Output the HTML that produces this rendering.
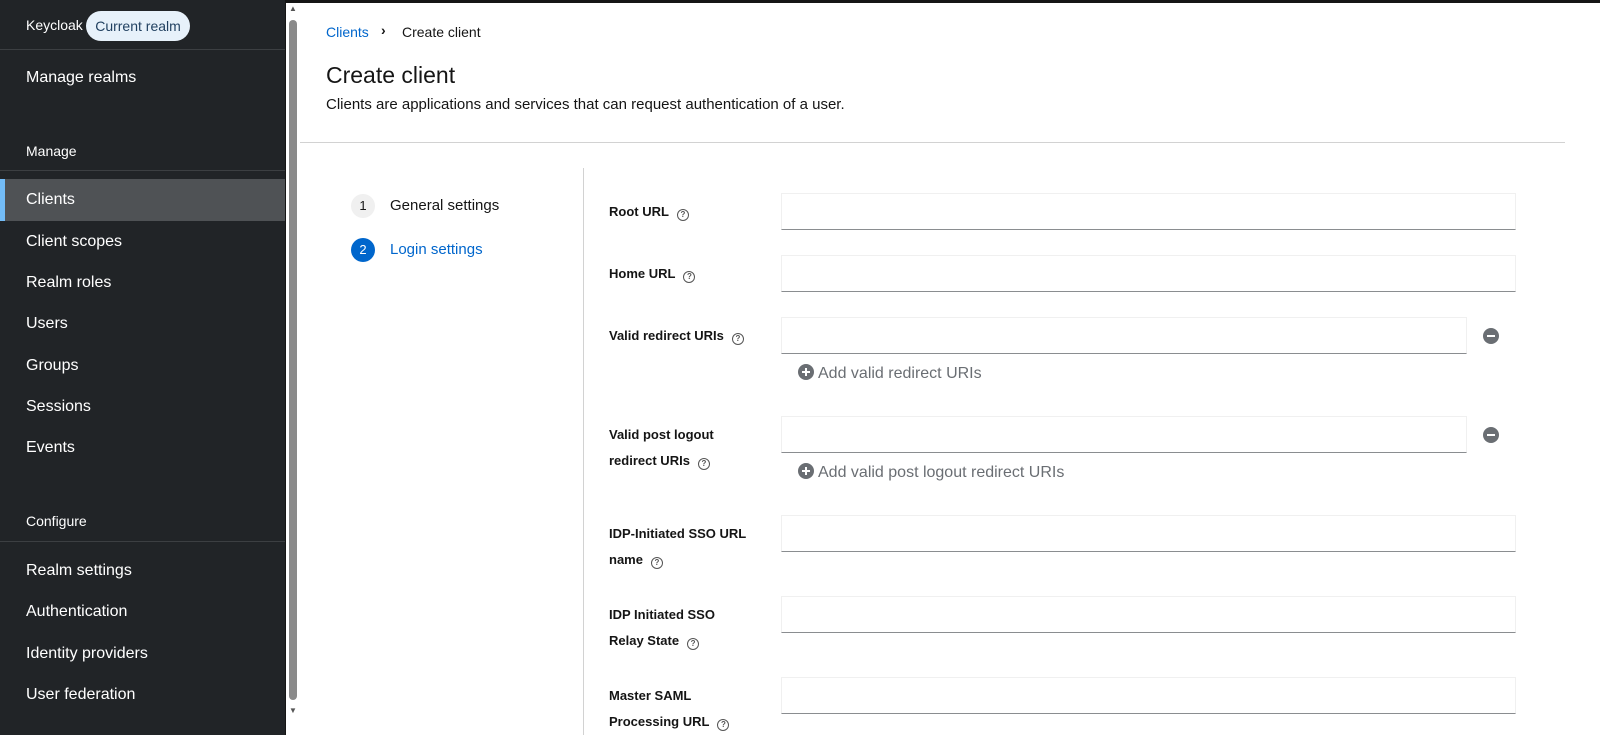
<!DOCTYPE html>
<html><head><style>
*{box-sizing:border-box;margin:0;padding:0}
body{width:1600px;height:735px;overflow:hidden;font-family:"Liberation Sans",sans-serif;background:#fff;position:relative}
.sb{position:absolute;left:0;top:0;width:285px;height:735px;background:#212427;color:#fff}
.sb .n{position:absolute;left:26px;font-size:16px;white-space:nowrap}
.sb .line{position:absolute;left:0;width:285px;height:1px;background:#3c3f42}
.sb .act{position:absolute;left:0;top:179px;width:285px;height:42px;background:#4f5255;border-left:5px solid #73bcf7}
.scroll{position:absolute;left:285px;top:0;width:15px;height:735px;background:#fff;border-left:1px solid #151515}
.thumb{position:absolute;left:289px;top:20px;width:8px;height:680px;background:#8a8a8a;border-radius:4px}
.topbar{position:absolute;left:285px;top:0;width:1315px;height:3px;background:#151515}
.t{position:absolute;white-space:nowrap}
.lbl{position:absolute;left:609px;font-size:13px;font-weight:bold;color:#151515;line-height:26px}
.q{display:inline-block;width:12px;height:12px;border:1.3px solid #555;border-radius:50%;font-size:8px;text-align:center;line-height:10px;font-weight:bold;color:#555;margin-left:8px;vertical-align:-1px}
.in{position:absolute;left:781px;width:735px;height:37px;border:1px solid #f0f0f0;border-bottom:1px solid #8a8d90}
.minus{position:absolute;left:1483px;width:16px;height:16px;border-radius:50%;background:#6a6e73}
.minus:after{content:"";position:absolute;left:4px;top:7px;width:8px;height:2px;background:#fff}
.add{position:absolute;left:798px;font-size:16px;color:#6a6e73}
.add i{display:inline-block;width:16px;height:16px;border-radius:50%;background:#6a6e73;position:relative;vertical-align:-2px;margin-right:4px}
.add i:before{content:"";position:absolute;left:4px;top:7px;width:8px;height:2px;background:#fff}
.add i:after{content:"";position:absolute;left:7px;top:4px;width:2px;height:8px;background:#fff}
</style></head><body>
<div class="sb">
<div class="n" style="top:17px;font-size:14px">Keycloak</div>
<div class="n" style="left:86px;top:11px;width:104px;height:30px;background:#e7f1fa;border-radius:15px;color:#1f3f5f;font-size:14px;line-height:30px;text-align:center">Current realm</div>
<div class="line" style="top:49px"></div>
<div class="n" style="top:69px">Manage realms</div>
<div class="n" style="top:143px;font-size:14px">Manage</div>
<div class="line" style="top:170px"></div>
<div class="act"></div>
<div class="n" style="top:191px">Clients</div>
<div class="n" style="top:233px">Client scopes</div>
<div class="n" style="top:274px">Realm roles</div>
<div class="n" style="top:315px">Users</div>
<div class="n" style="top:357px">Groups</div>
<div class="n" style="top:398px">Sessions</div>
<div class="n" style="top:439px">Events</div>
<div class="n" style="top:513px;font-size:14px">Configure</div>
<div class="line" style="top:541px"></div>
<div class="n" style="top:562px">Realm settings</div>
<div class="n" style="top:603px">Authentication</div>
<div class="n" style="top:645px">Identity providers</div>
<div class="n" style="top:686px">User federation</div>
</div>
<div class="scroll"></div><div class="thumb"></div>
<div class="t" style="left:289px;top:4px;font-size:8px;color:#555">▲</div>
<div class="t" style="left:289px;top:706px;font-size:8px;color:#555">▼</div>
<div class="topbar"></div>
<div class="t" style="left:326px;top:24px;font-size:14px;color:#0066cc">Clients</div>
<div class="t" style="left:381px;top:22px;font-size:14px;font-weight:bold;color:#151515">›</div>
<div class="t" style="left:402px;top:24px;font-size:14px;color:#151515">Create client</div>
<div class="t" style="left:326px;top:62px;font-size:23px;color:#151515">Create client</div>
<div class="t" style="left:326px;top:96px;font-size:15px;color:#151515">Clients are applications and services that can request authentication of a user.</div>
<div style="position:absolute;left:300px;top:142px;width:1265px;height:1px;background:#d2d2d2"></div>
<div style="position:absolute;left:583px;top:168px;width:1px;height:567px;background:#d2d2d2"></div>
<div style="position:absolute;left:351px;top:194px;width:24px;height:24px;border-radius:50%;background:#f0f0f0;font-size:13px;text-align:center;line-height:24px;color:#151515">1</div>
<div class="t" style="left:390px;top:197px;font-size:15px;color:#151515">General settings</div>
<div style="position:absolute;left:351px;top:238px;width:24px;height:24px;border-radius:50%;background:#0066cc;font-size:13px;text-align:center;line-height:24px;color:#fff">2</div>
<div class="t" style="left:390px;top:241px;font-size:15px;color:#0066cc">Login settings</div>
<div class="lbl" style="top:199px">Root URL<span class="q">?</span></div>
<div class="in" style="top:193px"></div>
<div class="lbl" style="top:261px">Home URL<span class="q">?</span></div>
<div class="in" style="top:255px"></div>
<div class="lbl" style="top:323px">Valid redirect URIs<span class="q">?</span></div>
<div class="in" style="top:317px;width:686px"></div>
<div class="minus" style="top:328px"></div>
<div class="add" style="top:364px"><i></i>Add valid redirect URIs</div>
<div class="lbl" style="top:422px">Valid post logout<br>redirect URIs<span class="q">?</span></div>
<div class="in" style="top:416px;width:686px"></div>
<div class="minus" style="top:427px"></div>
<div class="add" style="top:463px"><i></i>Add valid post logout redirect URIs</div>
<div class="lbl" style="top:521px">IDP-Initiated SSO URL<br>name<span class="q">?</span></div>
<div class="in" style="top:515px"></div>
<div class="lbl" style="top:602px">IDP Initiated SSO<br>Relay State<span class="q">?</span></div>
<div class="in" style="top:596px"></div>
<div class="lbl" style="top:683px">Master SAML<br>Processing URL<span class="q">?</span></div>
<div class="in" style="top:677px"></div>
</body></html>
